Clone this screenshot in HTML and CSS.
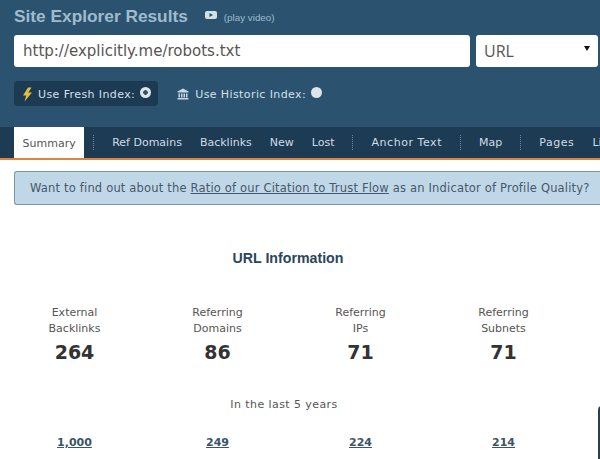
FILE: index.html
```html
<!DOCTYPE html>
<html lang="en">
<head>
<meta charset="utf-8">
<title>Site Explorer Results</title>
<link rel="stylesheet" href="styles.css">
</head>
<body>
<header class="hero">
  <div class="title-row">
    <h1 class="title">Site Explorer Results</h1>
    <svg class="video-icon" viewBox="0 0 12 10" width="12" height="10"><rect x="0" y="1" width="12" height="8" rx="2" fill="#d2dfe7"/><path d="M4.500 3v4l3.500-2z" fill="#2a526e"/></svg>
    <span class="play">(play video)</span>
  </div>
  <div class="search-row">
    <div class="url-input">http://explicitly.me/robots.txt</div>
    <div class="type-select"><span>URL</span><span class="caret"></span></div>
  </div>
  <div class="index-row">
    <div class="index-option active">
      <svg class="bolt" viewBox="0 0 11 15" width="11" height="15"><path d="M6 0.500L1 8.500h3.200L2.500 14.500l7.500-9H6.300L9.500 .5z" fill="#e2bd45"/></svg>
      <span class="option-text">Use Fresh Index:</span>
      <span class="radio checked"></span>
    </div>
    <div class="index-option">
      <svg class="bank" viewBox="0 0 12 12" width="12" height="12"><path d="M6 .5L11.500 3.500V4.500H.5V3.500zM1.500 5.500H3V9.500H1.500zM4 5.500H5.500V9.500H4zM6.500 5.500H8V9.500H6.500zM9 5.500H10.500V9.500H9zM.5 10H11.500V11.500H.5z" fill="#c8d8e2"/></svg>
      <span class="option-text">Use Historic Index:</span>
      <span class="radio"></span>
    </div>
  </div>
</header>
<nav class="tabs">
  <a class="tab current">Summary</a>
  <span class="sep"></span>
  <a class="tab">Ref Domains</a>
  <a class="tab">Backlinks</a>
  <a class="tab">New</a>
  <a class="tab">Lost</a>
  <span class="sep"></span>
  <a class="tab wide">Anchor Text</a>
  <span class="sep"></span>
  <a class="tab">Map</a>
  <span class="sep"></span>
  <a class="tab wide">Pages</a>
  <a class="tab">Link</a>
</nav>
<div class="notice">Want to find out about the <a class="notice-link">Ratio of our Citation to Trust Flow</a> as an Indicator of Profile Quality?</div>
<main class="info">
  <h2 class="info-title">URL Information</h2>
  <div class="stats">
    <div class="stat"><div class="label">External<br>Backlinks</div><div class="value">264</div></div>
    <div class="stat"><div class="label">Referring<br>Domains</div><div class="value">86</div></div>
    <div class="stat"><div class="label">Referring<br>IPs</div><div class="value">71</div></div>
    <div class="stat"><div class="label">Referring<br>Subnets</div><div class="value">71</div></div>
  </div>
  <p class="period">In the last 5 years</p>
  <div class="stats links">
    <a class="stat-link">1,000</a>
    <a class="stat-link">249</a>
    <a class="stat-link">224</a>
    <a class="stat-link">214</a>
  </div>
</main>
<div class="corner"></div>
</body>
</html>
```
FILE: styles.css
```css
* { box-sizing: border-box; }
html, body { margin: 0; height: 100%; }
body {
  width: 600px;
  height: 459px;
  overflow: hidden;
  position: relative;
  background: #fff;
  font-family: "DejaVu Sans", sans-serif;
  color: #444;
}
.hero {
  height: 127px;
  background: #2b536f;
  padding: 6px 0 0 14px;
}
.title-row { display: flex; align-items: center; height: 20px; }
.title {
  margin: 0;
  font: bold 17.300px "Liberation Sans", sans-serif;
  color: #9fbccd;
}
.video-icon { margin-left: 17px; margin-top: -2px; }
.play {
  margin-left: 7px;
  font: 9.800px "Liberation Sans", sans-serif;
  color: #9fbccd;
  margin-top: 2px;
}
.search-row { display: flex; gap: 6px; margin-top: 9px; }
.url-input, .type-select {
  height: 32px;
  background: #fff;
  border-radius: 3px;
  color: #555;
  font-size: 15px;
  display: flex;
  align-items: center;
}
.url-input { width: 456px; padding-left: 9px; }
.type-select { width: 122px; padding: 0 8px; justify-content: space-between; font-family: "Open Sans", sans-serif; font-size: 16px; }
.caret {
  border-left: 3px solid transparent;
  border-right: 3px solid transparent;
  border-top: 5px solid #111;
  margin-top: -5px;
}
.index-row { display: flex; align-items: center; margin-top: 14px; gap: 19px; }
.index-option {
  display: flex;
  align-items: center;
  height: 25px;
  font-size: 11px;
  color: #d3e0e8;
}
.option-text { letter-spacing: .4px; padding-top: 2px; }
.index-option.active {
  background: #1c3a52;
  border-radius: 4px;
  padding: 0 7px 0 8px;
}
.bolt { margin-right: 5px; margin-top: 1px; }
.bank { margin-right: 6px; }
.radio {
  width: 11px;
  height: 11px;
  border-radius: 50%;
  background: #dde4ea;
  margin-left: 5px;
  margin-top: -2px;
}
.radio.checked { background: radial-gradient(circle, #3a4f60 0 2px, #dde4ea 2.600px); }
.tabs {
  height: 33px;
  background: #1d3b53;
  border-bottom: 2px solid #dd8442;
  display: flex;
  align-items: stretch;
  padding-left: 14px;
  font-size: 11px;
  color: #cfdde6;
  white-space: nowrap;
  overflow: hidden;
}
.tab { display: flex; align-items: center; padding: 0 9px; }
.tab.wide { letter-spacing: .55px; }
.tab.current {
  background: #fff;
  color: #555;
  margin-top: -1px;
  margin-bottom: -2px;
  padding: 0 8.500px;
}
.sep {
  align-self: center;
  height: 15px;
  margin: 0 9px;
  border-left: 1px dotted #6e8799;
}
.notice {
  margin: 11px 0 0 14px;
  width: 600px;
  height: 34px;
  background: #c0d7e8;
  border: 1px solid #7d95a6;
  border-right: 0;
  border-radius: 3px 0 0 3px;
  font-size: 11.500px;
  letter-spacing: .18px;
  line-height: 32px;
  color: #47596a;
  padding-left: 15px;
  white-space: nowrap;
}
.notice-link { text-decoration: underline; }
.info { text-align: center; }
.info-title {
  margin: 45px 0 0 -24px;
  font: bold 14.200px "Liberation Sans", sans-serif;
  color: #2a465c;
}
.stats {
  display: grid;
  grid-template-columns: repeat(4, 143px);
  padding-left: 3px;
}
.stats:not(.links) { margin-top: 39px; }
.label { font-size: 11px; line-height: 16px; color: #555; }
.value { font-size: 19px; font-weight: bold; color: #333; margin-top: 3px; line-height: 24px; }
.period { margin: 34px 0 0 -32px; font-size: 11px; letter-spacing: .42px; color: #555; }
.links { margin-top: 25px; }
.stat-link { font-size: 11px; font-weight: bold; color: #3a5468; text-decoration: underline; }
.corner {
  position: absolute;
  right: -8px;
  top: 406px;
  width: 10px;
  height: 60px;
  border: 2px solid #2a3f4f;
  border-radius: 4px;
  background: #fff;
}
```
